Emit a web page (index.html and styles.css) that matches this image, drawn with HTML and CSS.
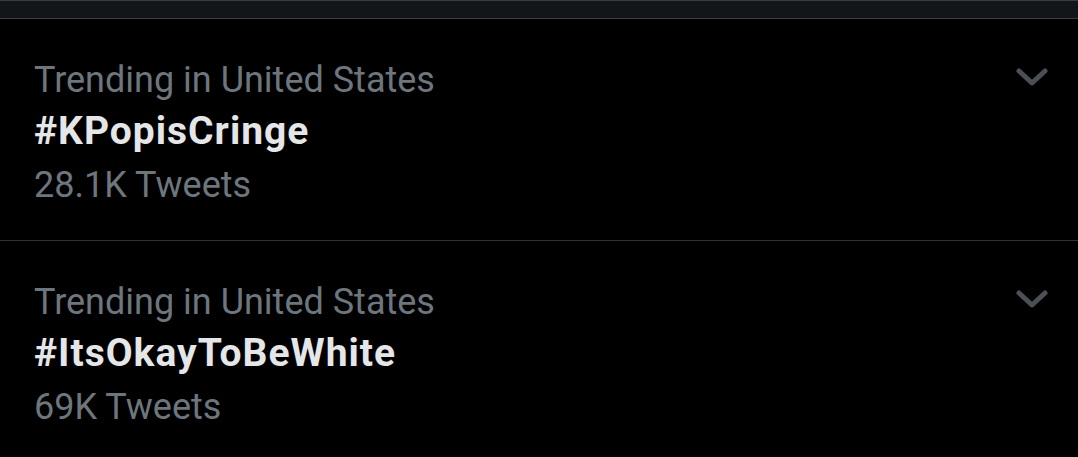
FILE: index.html
```html
<!DOCTYPE html>
<html lang="en">
<head>
    <meta charset="UTF-8">
    <meta name="viewport" content="width=device-width, initial-scale=1.0">
    <title>Trends</title>
    <link rel="stylesheet" href="styles.css">
</head>
<body>
    <div class="top-bar"></div>

    <section class="trends">
        <div class="trend">
            <div class="trend-text">
                <div class="trend-label">Trending in United States</div>
                <div class="trend-tag">#KPopisCringe</div>
                <div class="trend-count">28.1K Tweets</div>
            </div>
            <svg class="chevron" width="34" height="22" viewBox="0 0 34 22">
                <polyline points="4,5 17,17 30,5" />
            </svg>
        </div>

        <div class="trend">
            <div class="trend-text">
                <div class="trend-label">Trending in United States</div>
                <div class="trend-tag">#ItsOkayToBeWhite</div>
                <div class="trend-count">69K Tweets</div>
            </div>
            <svg class="chevron" width="34" height="22" viewBox="0 0 34 22">
                <polyline points="4,5 17,17 30,5" />
            </svg>
        </div>
    </section>
</body>
</html>
```

FILE: styles.css
```css
body {
    margin: 0;
    padding: 0;
    background: #000;
    font-family: Roboto, "Liberation Sans", sans-serif;
}

.top-bar {
    height: 17px;
    background: #131619;
    border-top: 1px solid #3a3d41;
    border-bottom: 1px solid #3a3d41;
}

.trend {
    display: flex;
    justify-content: space-between;
    align-items: flex-start;
    padding: 36px 29px 30px 34px;
    border-bottom: 1px solid #2f3336;
}

.trend-label {
    color: #6e767d;
    font-size: 36px;
    line-height: 50px;
}

.trend-tag {
    color: #e4e6e7;
    font-size: 39px;
    font-weight: bold;
    letter-spacing: 1px;
    line-height: 49px;
    margin-top: 2px;
}

.trend-count {
    color: #6e767d;
    font-size: 36px;
    line-height: 50px;
    margin-top: 4px;
}

.chevron {
    margin-top: 11px;
    fill: none;
    stroke: #4b5056;
    stroke-width: 5;
    stroke-linecap: round;
    stroke-linejoin: round;
}
```
